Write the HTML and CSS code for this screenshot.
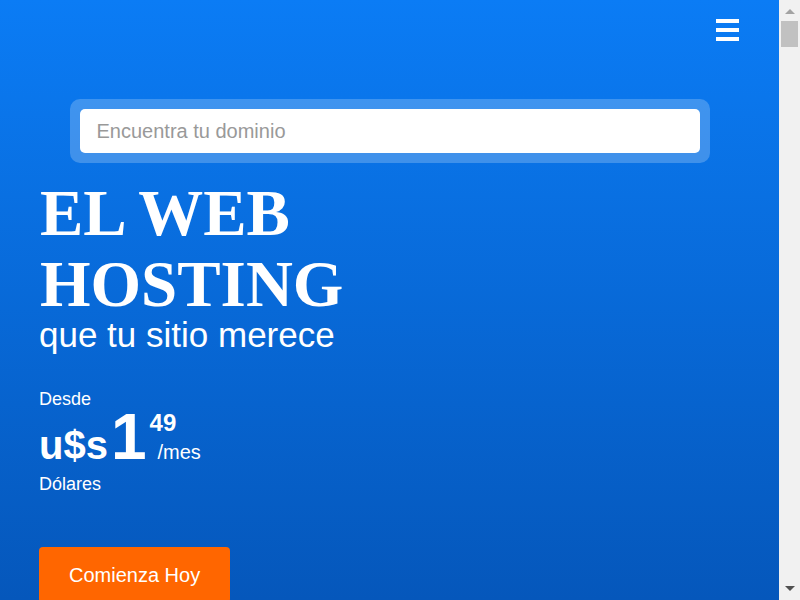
FILE: index.html
```html
<!DOCTYPE html>
<html lang="es">
<head>
<meta charset="utf-8">
<title>Web Hosting</title>
<link rel="stylesheet" href="styles.css">
</head>
<body>
<section class="hero">
  <header class="topbar">
    <button class="menu" aria-label="Menú">
      <span class="bar"></span>
      <span class="bar"></span>
      <span class="bar"></span>
    </button>
  </header>
  <form class="search">
    <input class="search-input" type="text" placeholder="Encuentra tu dominio">
  </form>
  <div class="content">
    <h1 class="title">EL WEB<br>HOSTING</h1>
    <p class="subtitle">que tu sitio merece</p>
    <p class="from">Desde</p>
    <div class="price">
      <span class="cur">u$s</span><span class="int">1</span><span class="dec"><span class="cents">49</span><span class="per">/mes</span></span>
    </div>
    <p class="unit">Dólares</p>
    <a class="cta" href="#">Comienza Hoy</a>
  </div>
</section>
<div class="scrollbar" aria-hidden="true">
  <span class="arrow-up"></span>
  <span class="thumb"></span>
  <span class="track"></span>
  <span class="arrow-down"></span>
</div>
</body>
</html>
```

FILE: styles.css
```css
html, body {
  margin: 0;
  padding: 0;
}
body {
  font-family: "Liberation Sans", Arial, sans-serif;
  color: #fff;
}
.hero {
  margin-right: 21px;
  background: linear-gradient(180deg, #0b7cf5 0px, #0557bb 600px);
  min-height: 720px;
}
.topbar {
  display: flex;
  justify-content: flex-end;
  padding: 19px 40px 0;
}
.menu {
  display: flex;
  flex-direction: column;
  gap: 5px;
  padding: 0;
  border: 0;
  background: none;
  cursor: pointer;
}
.bar {
  display: block;
  width: 23px;
  height: 4px;
  background: #fff;
}
.search {
  width: 620px;
  margin: 58px auto 0;
  padding: 10px;
  border-radius: 10px;
  background: rgba(255, 255, 255, 0.22);
}
.search-input {
  display: block;
  box-sizing: border-box;
  width: 100%;
  height: 44px;
  border: 0;
  border-radius: 5px;
  padding: 0 17px;
  font-family: "Liberation Sans", Arial, sans-serif;
  font-size: 20px;
  color: #333;
  background: #fff;
  outline: none;
}
.search-input::placeholder {
  color: #999;
}
.content {
  display: flex;
  flex-direction: column;
  align-items: flex-start;
  padding: 0 40px 0 39px;
}
.title {
  margin: 15px 0 0 1px;
  font-family: "Liberation Serif", "Times New Roman", serif;
  font-weight: bold;
  font-size: 65px;
  line-height: 71px;
}
.subtitle {
  margin: -4px 0 0;
  font-size: 35px;
  line-height: 38px;
}
.from, .unit {
  margin: 0;
  font-size: 18px;
  line-height: 21px;
}
.from {
  margin-top: 35px;
}
.price {
  margin-top: -5px;
  font-weight: bold;
  line-height: 1;
  white-space: nowrap;
}
.cur {
  font-size: 40px;
}
.int {
  font-size: 64px;
  margin-left: 3px;
}
.dec {
  display: inline-block;
  margin-left: 3px;
}
.cents {
  display: block;
  font-size: 24px;
  line-height: 24px;
}
.per {
  display: block;
  margin-top: 7px;
  padding-left: 8px;
  font-size: 20px;
  line-height: 20px;
  font-weight: normal;
}
.unit {
  margin-top: 5px;
}
.cta {
  margin-top: 52px;
  padding: 16px 30px;
  border-radius: 4px;
  background: #ff6600;
  color: #fff;
  font-size: 20px;
  line-height: 24px;
  text-decoration: none;
}
.scrollbar {
  position: fixed;
  top: 0;
  right: 0;
  bottom: 0;
  width: 21px;
  display: flex;
  flex-direction: column;
  align-items: center;
  background: #f1f1f1;
}
.arrow-up {
  margin-top: 9px;
  width: 0;
  height: 0;
  border-left: 5px solid transparent;
  border-right: 5px solid transparent;
  border-bottom: 5px solid #a3a3a3;
}
.thumb {
  margin-top: 7px;
  width: 17px;
  height: 26px;
  background: #c1c1c1;
}
.track {
  flex: 1;
}
.arrow-down {
  margin-bottom: 9px;
  width: 0;
  height: 0;
  border-left: 5px solid transparent;
  border-right: 5px solid transparent;
  border-top: 5px solid #505050;
}
```
